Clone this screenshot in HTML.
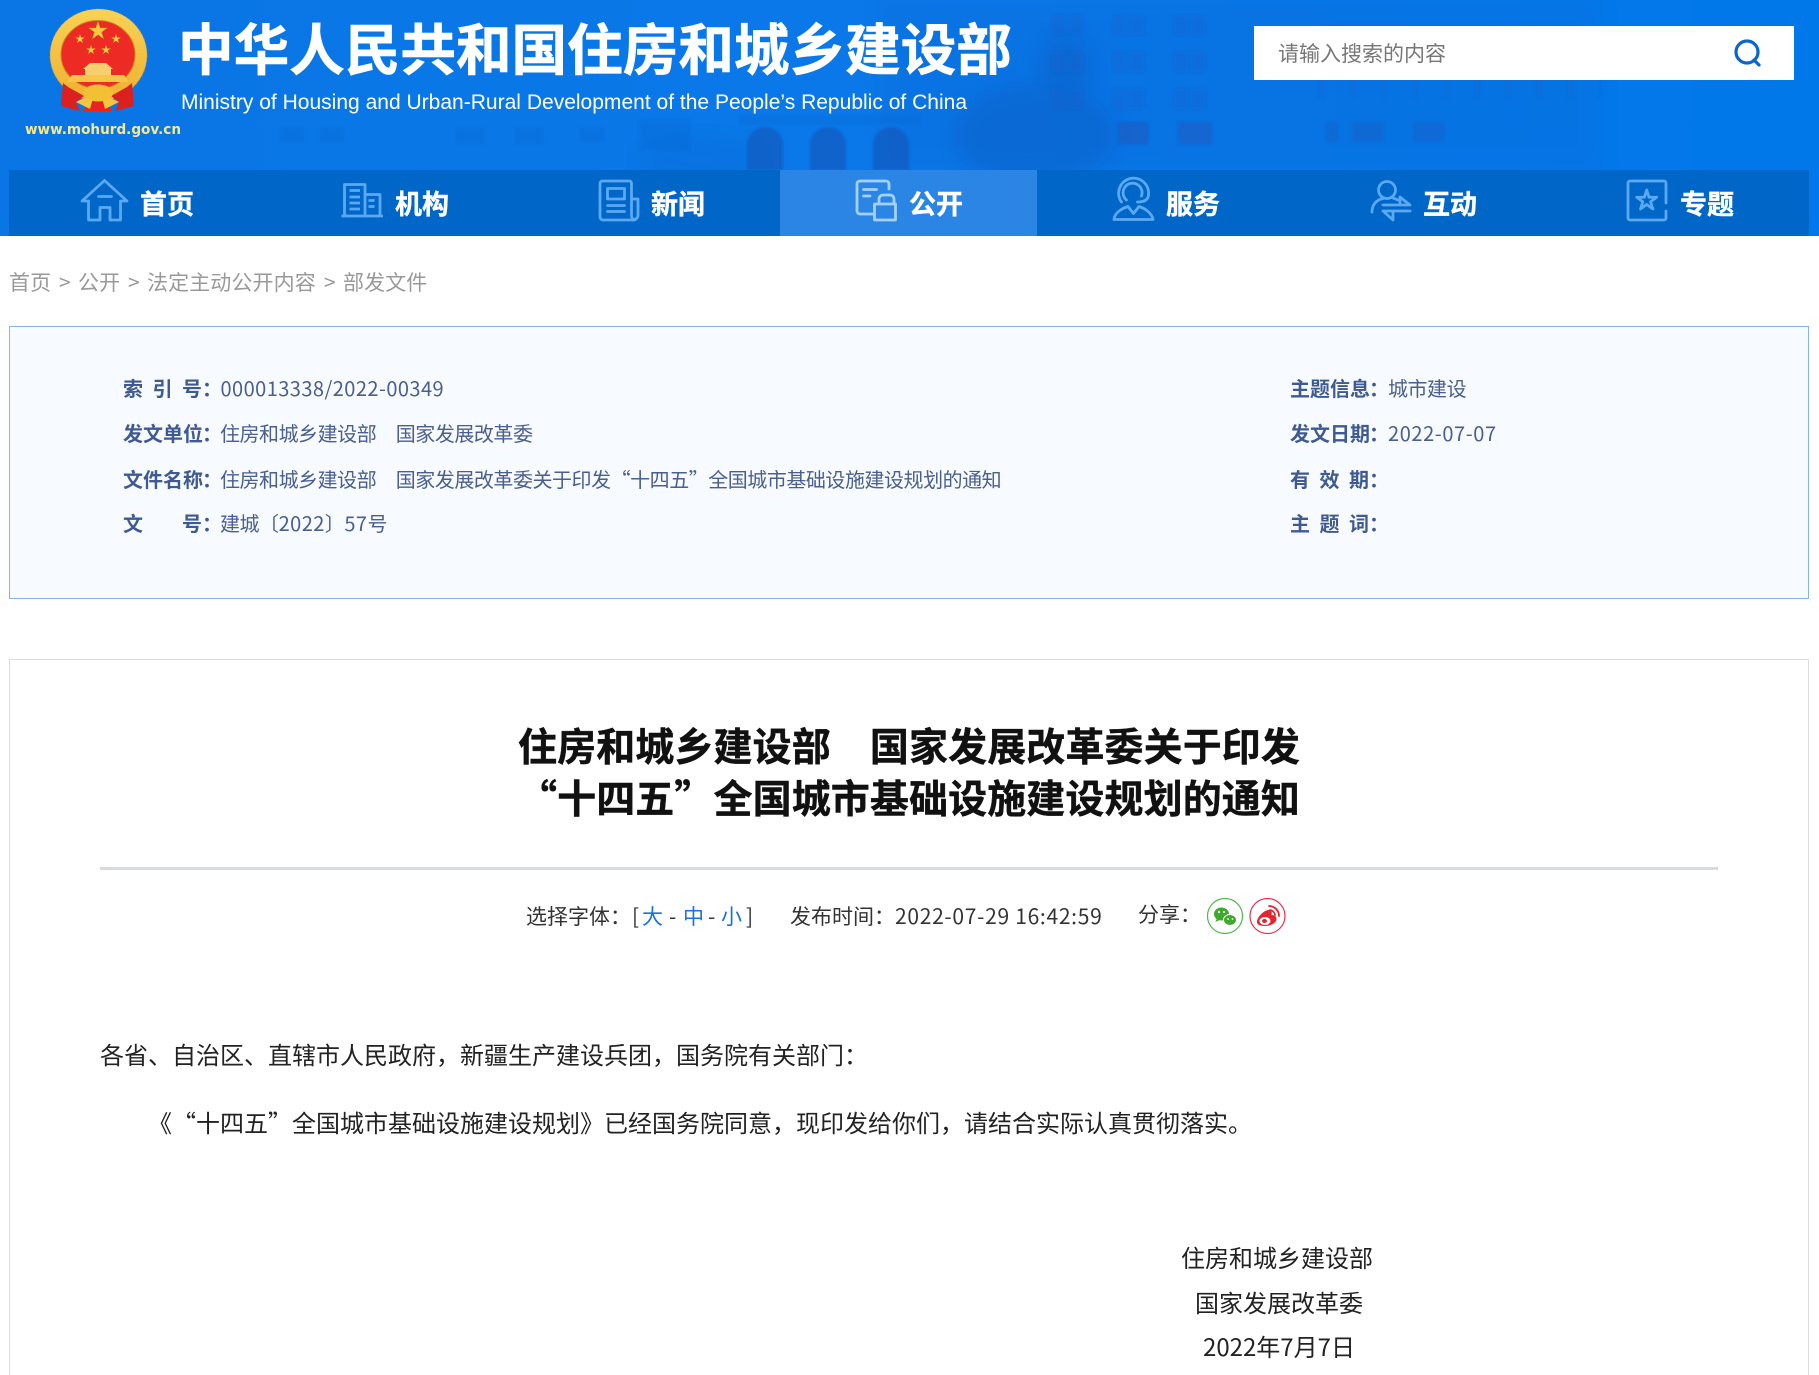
<!DOCTYPE html>
<html lang="zh-CN">
<head>
<meta charset="utf-8">
<title>住房和城乡建设部 国家发展改革委关于印发“十四五”全国城市基础设施建设规划的通知</title>
<style>
html,body{margin:0;padding:0;background:#fff;}
#p{position:relative;width:1819px;height:1375px;overflow:hidden;background:#fff;font-family:"Liberation Sans","Noto Sans CJK SC",sans-serif;text-spacing-trim:space-all;}
.a{position:absolute;white-space:nowrap;line-height:40px;height:40px;}
.cn{font-family:"Noto Sans CJK SC","Liberation Sans",sans-serif;}
#hd{position:absolute;left:0;top:0;width:1819px;height:236px;background:linear-gradient(90deg,#0a76e6 0%,#0a78e8 50%,#0078ea 100%);overflow:hidden;}
#nav{position:absolute;left:9px;top:170px;width:1800px;height:66px;background:#0066c8;}
#act{position:absolute;left:780px;top:170px;width:257px;height:66px;background:#2a85e5;}
.nt{font-family:"Noto Sans CJK SC",sans-serif;font-weight:700;font-size:27px;color:#fff;top:183px;-webkit-text-stroke:.4px #fff;}
.lb{color:#3f5a90;font-weight:700;font-size:20px;font-family:"Noto Sans CJK SC",sans-serif;display:flex;justify-content:space-between;width:79px;}
.co{color:#3f5a90;font-weight:700;font-size:20px;font-family:"Noto Sans CJK SC",sans-serif;}
.vl{color:#4a5f8e;font-size:20px;letter-spacing:-.47px;font-family:"Noto Sans CJK SC",sans-serif;}
.vl i{font-style:normal;letter-spacing:.45px;}
.bd{font-size:24px;color:#222;font-family:"Noto Sans CJK SC",sans-serif;}
.tt{font-size:39px;font-weight:700;color:#111;font-family:"Noto Sans CJK SC",sans-serif;letter-spacing:.1px;line-height:52px;height:52px;-webkit-text-stroke:.4px #111;}
.mt{font-size:21px;color:#333;font-family:"Noto Sans CJK SC",sans-serif;}
.bc{font-size:21px;color:#999;font-family:"Noto Sans CJK SC",sans-serif;letter-spacing:.1px;}
</style>
</head>
<body>
<div id="p">
<div id="hd">
<svg width="1819" height="236" style="position:absolute;left:0;top:0">
<defs>
<filter id="b1"><feGaussianBlur stdDeviation="1"/></filter>
<filter id="b6"><feGaussianBlur stdDeviation="9"/></filter>
<pattern id="w1" x="1052" y="15" width="61" height="37" patternUnits="userSpaceOnUse"><rect x="0" y="0" width="14" height="20" fill="#1a62c8"/><rect x="17" y="0" width="14" height="20" fill="#1a62c8"/></pattern>
<pattern id="w2" x="1320" y="0" width="31" height="40" patternUnits="userSpaceOnUse"><rect x="0" y="0" width="4" height="18" fill="#1a62c8"/></pattern>
</defs>
<rect x="880" y="0" width="720" height="170" fill="#0a6ad8" opacity=".3" filter="url(#b6)"/>
<g filter="url(#b6)" fill="#0b5cc0" opacity=".38">
<ellipse cx="1035" cy="135" rx="80" ry="50"/>
<ellipse cx="1065" cy="70" rx="25" ry="35"/>
<ellipse cx="700" cy="160" rx="60" ry="20" opacity=".4"/>
</g>
<g filter="url(#b1)">
<rect x="1052" y="15" width="160" height="95" fill="url(#w1)" opacity=".28"/>
<rect x="1118" y="122" width="30" height="22" fill="#1c5fc6" opacity=".75"/>
<rect x="1178" y="122" width="34" height="22" fill="#1c5fc6" opacity=".65"/>
<rect x="1320" y="80" width="280" height="20" fill="url(#w2)" opacity=".3"/>
<rect x="1326" y="122" width="12" height="20" fill="#1c5fc6" opacity=".5"/>
<rect x="1352" y="122" width="32" height="20" fill="#1c5fc6" opacity=".5"/>
<rect x="1414" y="122" width="30" height="20" fill="#1c5fc6" opacity=".45"/>
<path d="M747 170V145a18 18 0 0 1 36 0V170zM810 170V145a18 18 0 0 1 36 0V170zM873 170V145a18 18 0 0 1 36 0V170z" fill="#1455b8" opacity=".6"/>
<g fill="#1a62c8" opacity=".2"><rect x="280" y="128" width="24" height="14"/><rect x="320" y="128" width="24" height="14"/><rect x="456" y="128" width="28" height="16"/><rect x="515" y="128" width="28" height="16"/><rect x="580" y="128" width="24" height="14"/><rect x="640" y="120" width="50" height="30"/><rect x="740" y="116" width="180" height="8"/></g>
</g>
</svg>
<svg width="200" height="150" style="position:absolute;left:0;top:0">
<defs><linearGradient id="gd" x1="0" y1="0" x2="0" y2="1"><stop offset="0" stop-color="#f8d255"/><stop offset="1" stop-color="#f0b030"/></linearGradient></defs>
<ellipse cx="98.500" cy="55" rx="48.500" ry="46" fill="url(#gd)"/>
<ellipse cx="98.500" cy="55" rx="48.500" ry="46" fill="none" stroke="#d8982a" stroke-width="1" stroke-dasharray="2 3" opacity=".6"/>
<ellipse cx="98" cy="54.500" rx="37" ry="34" fill="#ee2a24" stroke="#c88a20" stroke-width="1"/>
<g fill="#f6c83e" stroke="#b5791a" stroke-width=".04">
<polygon transform="translate(98 31) scale(10)" points="0,-1 .224,-.309 .951,-.309 .363,.118 .588,.809 0,.382 -.588,.809 -.363,.118 -.951,-.309 -.224,-.309"/>
<polygon transform="translate(80 39) scale(5)" points="0,-1 .224,-.309 .951,-.309 .363,.118 .588,.809 0,.382 -.588,.809 -.363,.118 -.951,-.309 -.224,-.309"/>
<polygon transform="translate(116 39) scale(5)" points="0,-1 .224,-.309 .951,-.309 .363,.118 .588,.809 0,.382 -.588,.809 -.363,.118 -.951,-.309 -.224,-.309"/>
<polygon transform="translate(91 50) scale(5)" points="0,-1 .224,-.309 .951,-.309 .363,.118 .588,.809 0,.382 -.588,.809 -.363,.118 -.951,-.309 -.224,-.309"/>
<polygon transform="translate(106 50) scale(5)" points="0,-1 .224,-.309 .951,-.309 .363,.118 .588,.809 0,.382 -.588,.809 -.363,.118 -.951,-.309 -.224,-.309"/>
</g>
<path d="M90 63H106L113 69H83ZM85 69H111V75H85Z" fill="#f7cf6e"/>
<path d="M72 75H124L129 82H67Z" fill="#f7c548"/>
<path d="M63 83L61 106L80 111L76 102L84 96L68 87Z" fill="#dc1f1f"/>
<path d="M132 83L134 106L115 111L119 102L111 96L127 87Z" fill="#dc1f1f"/>
<path d="M83 111Q88 102 98 100Q108 102 112 111Z" fill="#e8251f"/>
<path d="M76 102Q84 97 93 98L90 109ZM119 102Q111 97 102 98L105 109Z" fill="#f4c63c"/>
<ellipse cx="98" cy="93" rx="15" ry="8.500" fill="#f2c035"/>
<text x="25" y="134" font-family="DejaVu Sans,sans-serif" font-weight="700" font-size="14.200" fill="#f6e88c" textLength="156" lengthAdjust="spacingAndGlyphs">www.mohurd.gov.cn</text>
</svg>
<div class="a cn" style="left:178px;top:17px;height:60px;line-height:60px;font-size:55.600px;font-weight:700;color:#fff;-webkit-text-stroke:.6px #fff;">中华人民共和国住房和城乡建设部</div>
<svg width="1000" height="40" style="position:absolute;left:0;top:85px"><text x="181" y="24" font-family="Liberation Sans,sans-serif" font-size="21" fill="#fff" textLength="786">Ministry of Housing and Urban-Rural Development of the People’s Republic of China</text></svg>
<div style="position:absolute;left:1254px;top:26px;width:540px;height:54px;background:#fff;"></div>
<div class="a cn" style="left:1278px;top:33px;font-size:21px;color:#777;">请输入搜索的内容</div>
<svg width="40" height="40" style="position:absolute;left:1728px;top:33px"><circle cx="19" cy="19" r="11" fill="none" stroke="#0a66cc" stroke-width="3.200"/><path d="M26 27l5 5" stroke="#0a66cc" stroke-width="3.200" stroke-linecap="round"/></svg>
</div>
<div id="nav"></div>
<div id="act"></div>
<svg width="1819" height="236" style="position:absolute;left:0;top:0" fill="none" stroke="#5ba8f3" stroke-width="2.800" stroke-linecap="round" stroke-linejoin="round">
<path d="M88 201H82L104.500 180.500L127 201H120.500M88.500 201V220H100V207.500H110V220H120.500V201M98.500 196.500H111.500"/>
<path d="M341.500 216H383M344.500 216V184.500H365V216M365 194.500H380V216M349.500 190.500H360M349.500 197H360M349.500 203H360M349.500 209H360M368.500 200.500H374.500M368.500 206.500H374.500" stroke-linecap="butt"/>
<path d="M631.500 199V183a2 2 0 0 0-2-2H602.500a2.500 2.500 0 0 0-2.500 2.500V217a3 3 0 0 0 3 3H633a5 5 0 0 0 5-5V199H631.500V215a5 5 0 0 0 3 5M607.500 188.500H624.500V199H607.500ZM607.500 205.500H624.500M607.500 211.500H624.500"/>
<g stroke="#a4d1fb"><path d="M889 189V184a3 3 0 0 0-3-3H860a3 3 0 0 0-3 3V211a3 3 0 0 0 3 3H873M863.500 189.500H876.500M863.500 196H870M874.500 204H895.500V220H874.500ZM879 204V199a4 4 0 0 1 4-4H890a4 4 0 0 1 4 4V204"/></g>
<path d="M1114 219.500H1153M1114 219C1115 212 1123 208 1128 206.500L1133.500 213.500L1139 206.500C1144 208 1151 212 1153 219"/>
<path d="M1121.500 202A15 15 0 1 1 1148.500 195Q1148 202 1137.500 202M1126.500 200A9.500 9.500 0 1 1 1141.500 196"/>
<circle cx="1387" cy="190" r="8.500"/>
<path d="M1372 212C1372 205 1376 200 1383 198.500M1393 198L1398 200M1383 205H1410L1400 197V205M1410 211H1383L1393 220V211"/>
<path d="M1666 203V183a2 2 0 0 0-2-2H1630a2 2 0 0 0-2 2V218a2 2 0 0 0 2 2H1664a2 2 0 0 0 2-2V211"/>
<polygon transform="translate(1646.700 200.500) scale(10.500)" stroke-width=".27" points="0,-1 .224,-.309 .951,-.309 .363,.118 .588,.809 0,.382 -.588,.809 -.363,.118 -.951,-.309 -.224,-.309"/>
</svg>
<div class="a nt" style="left:140px;">首页</div>
<div class="a nt" style="left:395px;">机构</div>
<div class="a nt" style="left:651px;">新闻</div>
<div class="a nt" style="left:909px;">公开</div>
<div class="a nt" style="left:1166px;">服务</div>
<div class="a nt" style="left:1423px;">互动</div>
<div class="a nt" style="left:1680px;">专题</div>

<div class="a bc" style="left:9px;top:262px;">首页</div>
<div class="a bc" style="left:59px;top:262px;">&gt;</div>
<div class="a bc" style="left:78px;top:262px;">公开</div>
<div class="a bc" style="left:128px;top:262px;">&gt;</div>
<div class="a bc" style="left:147px;top:262px;">法定主动公开内容</div>
<div class="a bc" style="left:324px;top:262px;">&gt;</div>
<div class="a bc" style="left:343px;top:262px;">部发文件</div>

<div style="position:absolute;left:9px;top:326px;width:1798px;height:271px;background:#f7faff;border:1px solid #86b4e6;"></div>
<div class="a lb" style="left:123px;top:368px;"><span>索</span><span>引</span><span>号</span></div><div class="a co" style="left:202px;top:368px;">&#65306;</div>
<div class="a vl" style="left:220.500px;top:368px;"><i>000013338/2022-00349</i></div>
<div class="a lb" style="left:123px;top:413px;"><span>发</span><span>文</span><span>单</span><span>位</span></div><div class="a co" style="left:202px;top:413px;">&#65306;</div>
<div class="a vl" style="left:220px;top:413px;">住房和城乡建设部　国家发展改革委</div>
<div class="a lb" style="left:123px;top:459px;"><span>文</span><span>件</span><span>名</span><span>称</span></div><div class="a co" style="left:202px;top:459px;">&#65306;</div>
<div class="a vl" style="left:220px;top:459px;">住房和城乡建设部　国家发展改革委关于印发“十四五”全国城市基础设施建设规划的通知</div>
<div class="a lb" style="left:123px;top:503px;"><span>文</span><span>号</span></div><div class="a co" style="left:202px;top:503px;">&#65306;</div>
<div class="a vl" style="left:220px;top:503px;">建城〔<i>2022</i>〕<i>57</i>号</div>

<div class="a lb" style="left:1290px;top:368px;"><span>主</span><span>题</span><span>信</span><span>息</span></div><div class="a co" style="left:1369px;top:368px;">&#65306;</div>
<div class="a vl" style="left:1388px;top:368px;">城市建设</div>
<div class="a lb" style="left:1290px;top:413px;"><span>发</span><span>文</span><span>日</span><span>期</span></div><div class="a co" style="left:1369px;top:413px;">&#65306;</div>
<div class="a vl" style="left:1388px;top:413px;"><i style="letter-spacing:.6px">2022-07-07</i></div>
<div class="a lb" style="left:1290px;top:459px;"><span>有</span><span>效</span><span>期</span></div><div class="a co" style="left:1369px;top:459px;">&#65306;</div>
<div class="a lb" style="left:1290px;top:503px;"><span>主</span><span>题</span><span>词</span></div><div class="a co" style="left:1369px;top:503px;">&#65306;</div>

<div style="position:absolute;left:9px;top:659px;width:1798px;height:730px;border:1px solid #ddd;background:#fff;"></div>
<div class="a tt" style="left:518px;top:719px;">住房和城乡建设部　国家发展改革委关于印发</div>
<div class="a tt" style="left:518px;top:771px;width:781px;text-align:right;">“十四五”全国城市基础设施建设规划的通知</div>
<div style="position:absolute;left:100px;top:867px;width:1618px;height:3px;background:#d5dae3;"></div>

<div class="a mt" style="left:526px;top:896px;">选择字体&#65306;</div>
<div class="a mt" style="left:632px;top:896px;">[</div>
<div class="a mt" style="left:642px;top:896px;color:#1a72d8;">大</div>
<div class="a mt" style="left:669px;top:896px;">-</div>
<div class="a mt" style="left:683px;top:896px;color:#1a72d8;">中</div>
<div class="a mt" style="left:708px;top:896px;">-</div>
<div class="a mt" style="left:721px;top:896px;color:#1a72d8;">小</div>
<div class="a mt" style="left:746px;top:896px;">]</div>
<div class="a mt" style="left:790px;top:896px;">发布时间&#65306;</div>
<div class="a mt" style="left:895px;top:896px;letter-spacing:.7px;">2022-07-29 16:42:59</div>
<div class="a mt" style="left:1138px;top:894px;">分享&#65306;</div>
<svg width="120" height="50" style="position:absolute;left:1195px;top:890px">
<circle cx="30" cy="26" r="17.500" fill="none" stroke="#4cb848" stroke-width="1.200"/>
<ellipse cx="26.500" cy="24" rx="7.500" ry="6.500" fill="#3fa92d"/><path d="M22 28l-1.500 4 5-2.500z" fill="#3fa92d"/>
<ellipse cx="35" cy="30" rx="6.500" ry="5.500" fill="#3fa92d" stroke="#fff" stroke-width="1"/>
<circle cx="24" cy="22" r="1.100" fill="#fff"/><circle cx="29" cy="22" r="1.100" fill="#fff"/><circle cx="33" cy="29" r=".9" fill="#fff"/><circle cx="37.500" cy="29" r=".9" fill="#fff"/>
<g transform="translate(2 0)">
<circle cx="70.500" cy="26" r="17.500" fill="none" stroke="#e8304a" stroke-width="1.200"/>
<path d="M60 32c0-5 7-12 12-12 3 0 3 3 2.500 5 4 0 5 2 5 4 0 4-6 7-11 7s-8.500-1-8.500-4z" fill="#e6242e"/>
<ellipse cx="68" cy="31" rx="5.500" ry="4" fill="#fff"/><ellipse cx="67.500" cy="31" rx="2.500" ry="2" fill="#e6242e"/>
<path d="M72 16a10 10 0 0 1 10 10M73 20a6 6 0 0 1 5 5" fill="none" stroke="#e6242e" stroke-width="1.800" stroke-linecap="round"/>
</g>
</svg>

<div class="a bd" style="left:100px;top:1034px;">各省、自治区、直辖市人民政府&#65292;新疆生产建设兵团&#65292;国务院有关部门&#65306;</div>
<div class="a bd" style="left:148px;top:1102px;">《“十四五”全国城市基础设施建设规划》已经国务院同意&#65292;现印发给你们&#65292;请结合实际认真贯彻落实。</div>
<div class="a bd" style="left:1177px;top:1237px;width:200px;text-align:center;">住房和城乡建设部</div>
<div class="a bd" style="left:1179px;top:1282px;width:200px;text-align:center;">国家发展改革委</div>
<div class="a bd" style="left:1179px;top:1326px;width:200px;text-align:center;">2022年7月7日</div>
</div>
</body>
</html>
